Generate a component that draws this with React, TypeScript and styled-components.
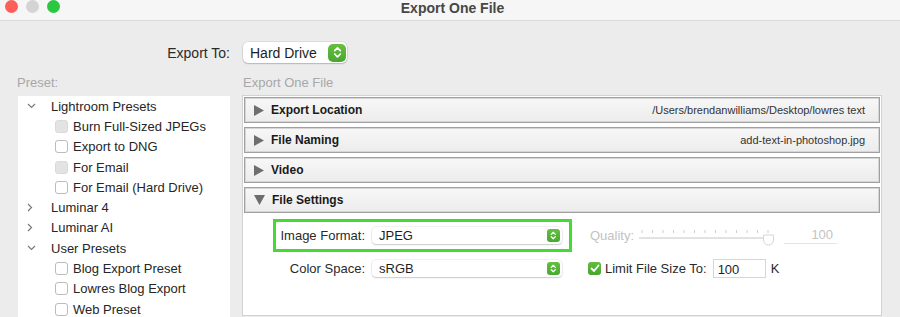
import styled, { createGlobalStyle } from "styled-components";

const GlobalStyle = createGlobalStyle`
  html, body {
    margin: 0;
    padding: 0;
    background: #ececec;
  }
  body {
    font-family: "Liberation Sans", Arial, sans-serif;
    color: #262626;
  }
`;

interface preset {
  name: string;
  disabled?: boolean;
}

interface group {
  name: string;
  open: boolean;
  items: preset[];
}

const groups: group[] = [
  {
    name: "Lightroom Presets",
    open: true,
    items: [
      { name: "Burn Full-Sized JPEGs", disabled: true },
      { name: "Export to DNG" },
      { name: "For Email", disabled: true },
      { name: "For Email (Hard Drive)" },
    ],
  },
  { name: "Luminar 4", open: false, items: [] },
  { name: "Luminar AI", open: false, items: [] },
  {
    name: "User Presets",
    open: true,
    items: [
      { name: "Blog Export Preset" },
      { name: "Lowres Blog Export" },
      { name: "Web Preset" },
    ],
  },
];

const sections = [
  { title: "Export Location", summary: "/Users/brendanwilliams/Desktop/lowres text" },
  { title: "File Naming", summary: "add-text-in-photoshop.jpg" },
  { title: "Video", summary: "" },
];

function Stepper({ size }: { size: number }) {
  return (
    <StepperBox $size={size}>
      <svg width={size * 0.5} height={size * 0.7} viewBox="0 0 8 11">
        <polyline points="1.5,4 4,1.5 6.5,4" fill="none" stroke="#fff" strokeWidth="1.5" strokeLinecap="round" strokeLinejoin="round" />
        <polyline points="1.5,7 4,9.5 6.5,7" fill="none" stroke="#fff" strokeWidth="1.5" strokeLinecap="round" strokeLinejoin="round" />
      </svg>
    </StepperBox>
  );
}

function Chevron({ open }: { open: boolean }) {
  return open ? (
    <svg width="9" height="6" viewBox="0 0 9 6">
      <polyline points="1,1 4.5,4.5 8,1" fill="none" stroke="#7a7a7a" strokeWidth="1.2" />
    </svg>
  ) : (
    <svg width="6" height="9" viewBox="0 0 6 9">
      <polyline points="1,1 4.5,4.5 1,8" fill="none" stroke="#7a7a7a" strokeWidth="1.2" />
    </svg>
  );
}

function Triangle({ open }: { open: boolean }) {
  return open ? (
    <svg width="11" height="10" viewBox="0 0 11 10">
      <polygon points="0,0 11,0 5.5,10" fill="#6e6e6e" />
    </svg>
  ) : (
    <svg width="10" height="11" viewBox="0 0 10 11">
      <polygon points="0,0 10,5.5 0,11" fill="#6e6e6e" />
    </svg>
  );
}

function QualitySlider() {
  const ticks = Array.from({ length: 13 }, (_, i) => 3 + i * 10.5);
  return (
    <svg width="136" height="20" viewBox="0 0 136 20">
      {ticks.map((x) => (
        <line key={x} x1={x} y1="4" x2={x} y2="7" stroke="#cfcfcf" strokeWidth="1" />
      ))}
      <line x1="0" y1="12" x2="134" y2="12" stroke="#e2e2e2" strokeWidth="2" />
      <path d="M124.5,9 L134.5,9 L134.5,14 A5,5 0 0 1 124.5,14 Z" fill="#fff" stroke="#d6d6d6" strokeWidth="1" />
    </svg>
  );
}

function App(): JSX.Element {
  return (
    <Window>
      <GlobalStyle />
      <TitleBar>
        <Lights>
          <Light $color="#fe5f57" />
          <Light $color="#d4d4d4" />
          <Light $color="#2ac840" />
        </Lights>
        <Title>Export One File</Title>
        <span />
      </TitleBar>
      <Content>
        <ExportToLabel>Export To:</ExportToLabel>
        <ExportSelect>
          <span>Hard Drive</span>
          <Stepper size={18} />
        </ExportSelect>
        <PaneLabel>Preset:</PaneLabel>
        <PaneLabel $right>Export One File</PaneLabel>
        <PresetList>
          {groups.map((g) => (
            <div key={g.name}>
              <TreeRow $level={0}>
                <ChevronBox>
                  <Chevron open={g.open} />
                </ChevronBox>
                {g.name}
              </TreeRow>
              {g.items.map((p) => (
                <TreeRow key={p.name} $level={1}>
                  <Check $disabled={p.disabled} />
                  {p.name}
                </TreeRow>
              ))}
            </div>
          ))}
        </PresetList>
        <SettingsPanel>
          {sections.map((s) => (
            <SectionHeader key={s.title}>
              <Triangle open={false} />
              <SectionTitle>{s.title}</SectionTitle>
              <Summary>{s.summary}</Summary>
            </SectionHeader>
          ))}
          <SectionHeader>
            <Triangle open={true} />
            <SectionTitle>File Settings</SectionTitle>
          </SectionHeader>
          <FileSettings>
            <FormColumn>
              <FormRow $highlight>
                <FieldLabel>Image Format:</FieldLabel>
                <Select>
                  <span>JPEG</span>
                  <Stepper size={13} />
                </Select>
              </FormRow>
              <FormRow>
                <FieldLabel>Color Space:</FieldLabel>
                <Select>
                  <span>sRGB</span>
                  <Stepper size={13} />
                </Select>
              </FormRow>
            </FormColumn>
            <FormColumn>
              <OptionRow>
                <DimLabel>Quality:</DimLabel>
                <SliderBox>
                  <QualitySlider />
                </SliderBox>
                <NumberField>100</NumberField>
              </OptionRow>
              <OptionRow>
                <GreenCheck>
                  <svg width="10" height="9" viewBox="0 0 10 9">
                    <polyline points="1.5,4.5 4,7 8.5,1.5" fill="none" stroke="#fff" strokeWidth="1.8" strokeLinecap="round" strokeLinejoin="round" />
                  </svg>
                </GreenCheck>
                <OptionText>Limit File Size To:</OptionText>
                <SizeInput>100</SizeInput>
                <OptionText>K</OptionText>
              </OptionRow>
            </FormColumn>
          </FileSettings>
        </SettingsPanel>
      </Content>
    </Window>
  );
}

export default App;

const Window = styled.div`
  width: 900px;
  height: 317px;
  overflow: hidden;
  background: #ececec;
`;

const TitleBar = styled.div`
  box-sizing: border-box;
  height: 21px;
  padding: 1px 0 6px 5px;
  display: grid;
  grid-template-columns: 1fr auto 1fr;
  align-items: center;
  background: #f6f6f6;
  border-bottom: 1px solid #dadada;
`;

const Lights = styled.div`
  display: flex;
  gap: 8px;
  margin-top: -3px;
`;

const Light = styled.div<{ $color: string }>`
  width: 13px;
  height: 13px;
  border-radius: 50%;
  background: ${(p) => p.$color};
`;

const Title = styled.div`
  font-size: 14px;
  line-height: 14px;
  font-weight: bold;
  color: #474747;
`;

const Content = styled.div`
  display: grid;
  grid-template-columns: 213px 640px;
  column-gap: 12px;
  padding: 21px 0 0 17px;
`;

const ExportToLabel = styled.div`
  justify-self: end;
  align-self: center;
  font-size: 14px;
  color: #2a2a2a;
`;

const ExportSelect = styled.div`
  box-sizing: border-box;
  width: 104px;
  height: 21px;
  margin-left: 1px;
  padding: 0 1px 0 7px;
  display: flex;
  align-items: center;
  justify-content: space-between;
  background: #fff;
  border-radius: 5px;
  box-shadow: 0 0 0 0.5px rgba(0, 0, 0, 0.12), 0 1px 1.5px rgba(0, 0, 0, 0.18);
  font-size: 14px;
  color: #1e1e1e;
`;

const StepperBox = styled.div<{ $size: number }>`
  width: ${(p) => p.$size}px;
  height: ${(p) => p.$size}px;
  border-radius: ${(p) => (p.$size > 15 ? 5 : 3)}px;
  background: linear-gradient(#66c040, #48a82f);
  display: flex;
  align-items: center;
  justify-content: center;
`;

const PaneLabel = styled.div<{ $right?: boolean }>`
  margin: 12px 0 5px ${(p) => (p.$right ? 1 : 0)}px;
  font-size: 13px;
  line-height: 15px;
  color: #a8a8a8;
`;

const PresetList = styled.div`
  margin: 1px 0 0 1px;
  height: 230px;
  background: #fff;
`;

const TreeRow = styled.div<{ $level: number }>`
  height: 20.3px;
  display: flex;
  align-items: center;
  padding-left: ${(p) => (p.$level === 0 ? 9 : 37)}px;
  gap: ${(p) => (p.$level === 0 ? 0 : 5)}px;
  font-size: 13px;
  color: #262626;
`;

const ChevronBox = styled.span`
  width: 24px;
  display: flex;
  align-items: center;
`;

const Check = styled.span<{ $disabled?: boolean }>`
  box-sizing: border-box;
  width: 13px;
  height: 13px;
  border-radius: 3px;
  background: ${(p) => (p.$disabled ? "#e3e3e3" : "#fff")};
  border: 1px solid ${(p) => (p.$disabled ? "#dadada" : "#bcbcbc")};
`;

const SettingsPanel = styled.div`
  box-sizing: border-box;
  height: 221px;
  padding: 1px;
  background: #fff;
  border: 1px solid #d2d2d2;
  display: flex;
  flex-direction: column;
  gap: 4px;
`;

const SectionHeader = styled.div`
  box-sizing: border-box;
  flex: none;
  height: 26px;
  padding: 0 14px 0 9px;
  display: flex;
  align-items: center;
  gap: 7px;
  background: linear-gradient(#f8f8f8, #ececec);
  border: 1px solid #a0a0a0;
  box-shadow: inset 0 0 0 1px #d6d6d6;
`;

const SectionTitle = styled.span`
  font-size: 12px;
  font-weight: bold;
  color: #1a1a1a;
`;

const Summary = styled.span`
  margin-left: auto;
  font-size: 11px;
  color: #333;
`;

const FileSettings = styled.div`
  display: flex;
  gap: 16px;
  padding: 2px 0 0 29px;
`;

const FormColumn = styled.div`
  display: flex;
  flex-direction: column;
`;

const FormRow = styled.div<{ $highlight?: boolean }>`
  box-sizing: border-box;
  height: 33px;
  width: 299px;
  padding: 0 7px 0 3px;
  display: grid;
  grid-template-columns: 86px 190px;
  column-gap: 7px;
  align-items: center;
  border: 3px solid ${(p) => (p.$highlight ? "#45d933" : "transparent")};
`;

const FieldLabel = styled.span`
  justify-self: end;
  font-size: 13px;
  color: #2a2a2a;
`;

const Select = styled.div`
  box-sizing: border-box;
  height: 17px;
  padding: 0 2px 0 7px;
  display: flex;
  align-items: center;
  justify-content: space-between;
  background: #fff;
  border-radius: 4px;
  box-shadow: 0 0 0 0.5px rgba(0, 0, 0, 0.1), 0 1px 1.5px rgba(0, 0, 0, 0.16);
  font-size: 13px;
  color: #1e1e1e;
`;

const OptionRow = styled.div`
  height: 33px;
  display: flex;
  align-items: center;
`;

const DimLabel = styled.span`
  margin-left: 2px;
  font-size: 13px;
  color: #c3c3c3;
`;

const SliderBox = styled.div`
  margin-left: 5px;
  display: flex;
`;

const NumberField = styled.div`
  box-sizing: border-box;
  width: 53px;
  height: 17px;
  margin-left: 9px;
  padding-right: 4px;
  text-align: right;
  font-size: 13px;
  color: #c3c3c3;
  border-bottom: 1px solid #e4e4e4;
`;

const GreenCheck = styled.span`
  width: 13px;
  height: 13px;
  border-radius: 3px;
  background: linear-gradient(#62bd3d, #46a52e);
  display: flex;
  align-items: center;
  justify-content: center;
  margin-right: 4px;
`;

const OptionText = styled.span`
  font-size: 13px;
  color: #2a2a2a;
`;

const SizeInput = styled.div`
  box-sizing: border-box;
  width: 53px;
  height: 19px;
  margin: 0 5px 0 6px;
  padding: 2px 0 0 4px;
  font-size: 13px;
  color: #1e1e1e;
  border: 1px solid #d6d6d6;
  background: #fff;
`;
